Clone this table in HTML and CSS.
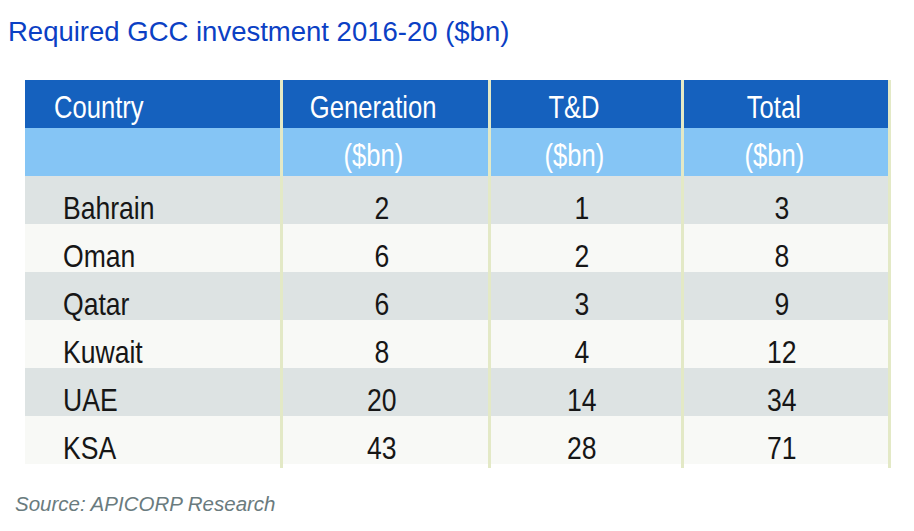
FILE: index.html
```html
<!DOCTYPE html>
<html>
<head>
<meta charset="utf-8">
<link rel="stylesheet" href="styles.css">
</head>
<body>
<div class="page">
  <h1 class="title">Required GCC investment 2016-20 ($bn)</h1>
  <div class="grid">
    <div class="row head-dark">
      <div class="cell name"><span class="t">Country</span></div>
      <div class="cell val c2"><span class="t">Generation</span></div>
      <div class="cell val c3"><span class="t">T&amp;D</span></div>
      <div class="cell val c4"><span class="t">Total</span></div>
    </div>
    <div class="row head-light">
      <div class="cell name"></div>
      <div class="cell val c2"><span class="t">($bn)</span></div>
      <div class="cell val c3"><span class="t">($bn)</span></div>
      <div class="cell val c4"><span class="t">($bn)</span></div>
    </div>
    <div class="row data odd">
      <div class="cell name"><span class="t">Bahrain</span></div>
      <div class="cell val c2"><span class="t">2</span></div>
      <div class="cell val c3"><span class="t">1</span></div>
      <div class="cell val c4"><span class="t">3</span></div>
    </div>
    <div class="row data even">
      <div class="cell name"><span class="t">Oman</span></div>
      <div class="cell val c2"><span class="t">6</span></div>
      <div class="cell val c3"><span class="t">2</span></div>
      <div class="cell val c4"><span class="t">8</span></div>
    </div>
    <div class="row data odd">
      <div class="cell name"><span class="t">Qatar</span></div>
      <div class="cell val c2"><span class="t">6</span></div>
      <div class="cell val c3"><span class="t">3</span></div>
      <div class="cell val c4"><span class="t">9</span></div>
    </div>
    <div class="row data even">
      <div class="cell name"><span class="t">Kuwait</span></div>
      <div class="cell val c2"><span class="t">8</span></div>
      <div class="cell val c3"><span class="t">4</span></div>
      <div class="cell val c4"><span class="t">12</span></div>
    </div>
    <div class="row data odd">
      <div class="cell name"><span class="t">UAE</span></div>
      <div class="cell val c2"><span class="t">20</span></div>
      <div class="cell val c3"><span class="t">14</span></div>
      <div class="cell val c4"><span class="t">34</span></div>
    </div>
    <div class="row data even">
      <div class="cell name"><span class="t">KSA</span></div>
      <div class="cell val c2"><span class="t">43</span></div>
      <div class="cell val c3"><span class="t">28</span></div>
      <div class="cell val c4"><span class="t">71</span></div>
    </div>
    <div class="row tail">
      <div class="cell name"></div>
      <div class="cell val c2"></div>
      <div class="cell val c3"></div>
      <div class="cell val c4"></div>
    </div>
  </div>
  <p class="source">Source: APICORP Research</p>
</div>
</body>
</html>
```
FILE: styles.css
```css
html, body {
  margin: 0;
  padding: 0;
  background: #ffffff;
}
.page {
  width: 914px;
  height: 531px;
  overflow: hidden;
}
.title {
  margin: 0;
  padding: 12px 0 0 8px;
  height: 80px;
  box-sizing: border-box;
  font-family: "Liberation Sans", Arial, sans-serif;
  font-weight: normal;
  font-size: 27.5px;
  line-height: 40px;
  color: #0b40c4;
  white-space: nowrap;
}
.grid {
  margin-left: 25px;
  width: 866px;
  display: flex;
  flex-direction: column;
  font-family: "Liberation Sans", Arial, sans-serif;
  font-size: 32px;
}
.row {
  display: flex;
  height: 48px;
}
.row.tail {
  height: 4px;
}
.cell {
  box-sizing: border-box;
  height: 100%;
  line-height: 32px;
  white-space: nowrap;
  overflow: visible;
}
.cell.name {
  width: 255px;
}
.cell.val {
  border-left: 3px solid #e3e9c6;
  text-align: center;
}
.cell.c2 { width: 208px; }
.cell.c3 { width: 193px; }
.cell.c4 { width: 210px; border-right: 3px solid #e3e9c6; }

.t {
  display: inline-block;
  transform: scaleX(0.83);
}
.cell.name .t {
  transform-origin: left center;
}
.head-dark {
  background: #1561be;
  color: #ffffff;
}
.head-light {
  background: #85c5f5;
  color: #ffffff;
}
.head-dark .cell,
.head-light .cell {
  padding-top: 11px;
}
.head-dark .t,
.head-light .t {
  transform: scaleX(0.8);
}
.head-dark .name,
.head-light .name {
  padding-left: 29px;
}
.head-dark .val,
.head-light .val {
  padding-right: 24px;
}
.data {
  color: #161616;
}
.data .cell {
  padding-top: 16px;
}
.data .name {
  padding-left: 38px;
}
.data .val {
  padding-right: 8px;
}
.odd { background: #dde3e3; }
.even { background: #f8f9f6; }
.tail { background: #ffffff; }

.source {
  margin: 24px 0 0 15px;
  font-family: "Liberation Sans", Arial, sans-serif;
  font-style: italic;
  font-size: 20.5px;
  line-height: 24px;
  color: #6a7b7e;
}
```
